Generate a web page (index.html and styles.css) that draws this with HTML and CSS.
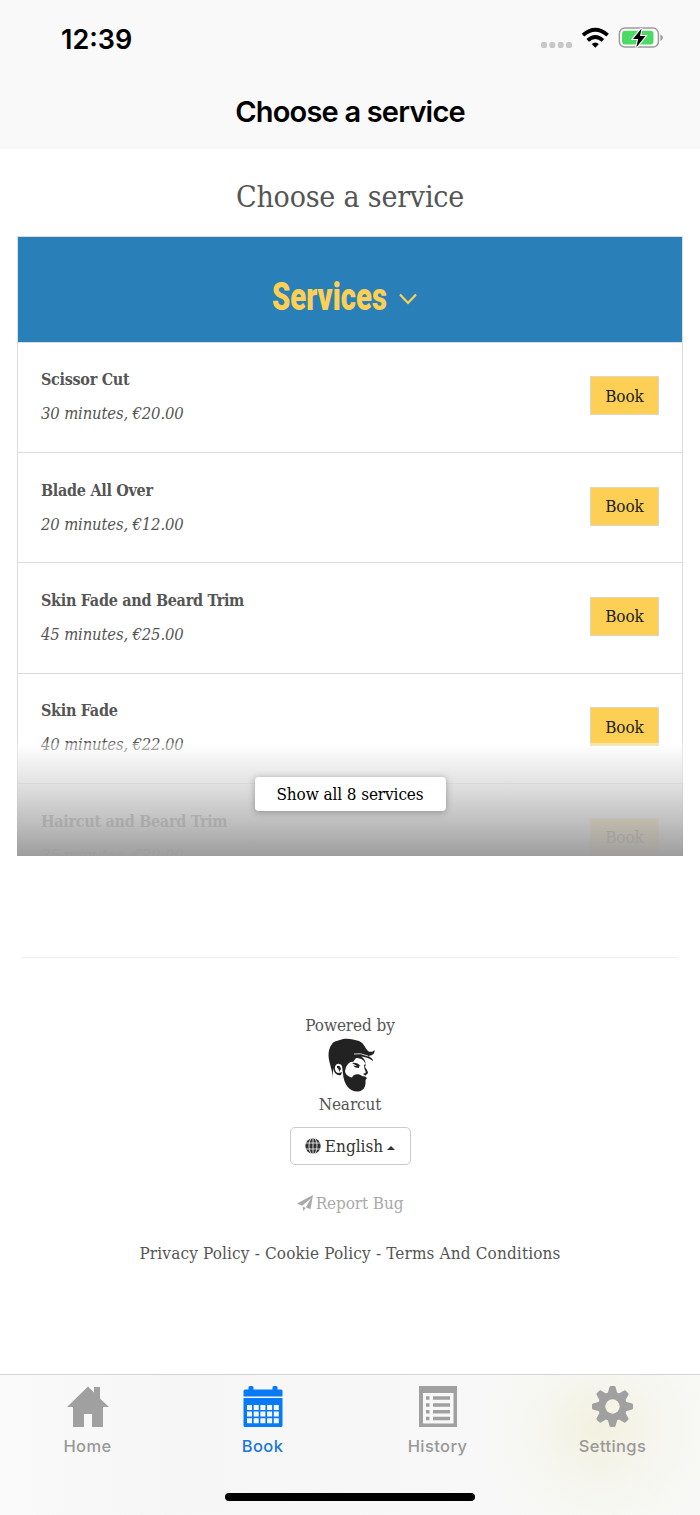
FILE: index.html
```html
<!DOCTYPE html>
<html lang="en">
<head>
<meta charset="utf-8">
<title>Choose a service</title>
<link rel="stylesheet" href="styles.css">
</head>
<body>
<header class="top">
  <div class="status">
    <span class="time">12:39</span>
    <svg class="status-icons" width="124" height="24" viewBox="0 0 124 24">
      <g fill="#c7c7c7"><rect x="1" y="15" width="6" height="6" rx="2"/><rect x="9.3" y="15" width="6" height="6" rx="2"/><rect x="17.7" y="15" width="6" height="6" rx="2"/><rect x="26" y="15" width="6" height="6" rx="2"/></g>
      <g fill="none" stroke="#000" stroke-width="3.7"><path d="M43 8.2Q55.3-2.6 67.6 8.2"/><path d="M47.7 13.3Q55.3 6.7 62.9 13.3"/></g>
      <path d="M51.7 17Q55.3 13.9 58.9 17L55.3 20.7Z"/>
      <rect x="79.4" y="1.1" width="39" height="19" rx="5.4" fill="#fff" stroke="#9b9b9b" stroke-width="1.5"/>
      <rect x="82" y="3.7" width="31.5" height="13.8" rx="3" fill="#4cd964"/>
      <path d="M120.4 7.4q2.5 1 2.5 3.3t-2.5 3.3Z" fill="#9b9b9b"/>
      <path d="M101.5 1.5L93 12h5.2l-2 8.5L105.5 9H100Z" stroke="#fff" stroke-width="2.2" paint-order="stroke"/>
    </svg>
  </div>
  <h1 class="nav-title">Choose a service</h1>
</header>
<main class="page">
  <h2 class="heading">Choose a service</h2>
  <section class="panel">
    <div class="panel-head"><span class="panel-title">Services</span>
      <svg class="chevron" width="18" height="13" viewBox="0 0 18 13"><path d="M1 1.5L9 10L17 1.5" fill="none" stroke="#fdd055" stroke-width="2.2"/></svg>
    </div>
    <div class="row"><div><div class="name">Scissor Cut</div><div class="meta">30 minutes, €20.00</div></div><button class="book">Book</button></div>
    <div class="row"><div><div class="name">Blade All Over</div><div class="meta">20 minutes, €12.00</div></div><button class="book">Book</button></div>
    <div class="row"><div><div class="name">Skin Fade and Beard Trim</div><div class="meta">45 minutes, €25.00</div></div><button class="book">Book</button></div>
    <div class="row"><div><div class="name">Skin Fade</div><div class="meta">40 minutes, €22.00</div></div><button class="book">Book</button></div>
    <div class="row"><div><div class="name">Haircut and Beard Trim</div><div class="meta">35 minutes, €20.00</div></div><button class="book">Book</button></div>
    <div class="fade"><button class="show-all">Show all 8 services</button></div>
  </section>
  <hr class="rule">
  <footer class="foot">
    <div class="powered">Powered by</div>
    <svg class="logo" width="50" height="54" viewBox="4 4 50 54">
      <path fill="#222" d="M11 45C11 39 9 35 8 30C6 23 5.500 16 10 10C12 7 15 7 18 6C23 3.500 31 5 37 7C42 9 43 14 46 17C48 18.500 51 18 52.500 16C53 20 50 22 46 22C49 23 51 25 51 27C47 24 43 23 39 22.500C42 24 44 28 43.500 30C42 26 39 24 34 24L31 28C28 27 26 30 24 33L23 37C23.500 41 27 43 30 43.500C31 40 37 39 40 42L43 42.500L45 44L43.500 46C44 52 42 57 36 57.500C28 58 22 51 21 40L20 32C18 29 14 29 13 33C12.500 36 14 39 17 39L20 38L19 41C15 42 12 39 11 34Z"/>
      <path d="M32 20Q38 18.500 46 22" fill="none" stroke="#fff" stroke-width=".8"/>
      <path fill="#222" d="M30 29Q35 28 39 32L37.500 31.500L37 34Q33 34 31 31.500L35 32ZM42 31L44 30L43 33Q46 37 46 39L43.500 41.500L41 40L44 38.500Q42 35 42 31ZM15 32Q18 31 19 35L17 38Q17 34 15 34Z"/>
    </svg>
    <div class="brand">Nearcut</div>
    <button class="lang">
      <svg width="16" height="16" viewBox="0 0 16 16"><circle cx="8" cy="8" r="7.7" fill="#333"/><g fill="none" stroke="#fff" stroke-width=".8"><ellipse cx="8" cy="8" rx="4" ry="8.500"/><path d="M8 0v16M0 5h16M0 11h16"/></g></svg>
      <span class="lang-label">English</span><i class="caret"></i>
    </button>
    <a class="bug"><svg width="16" height="16" viewBox="0 0 16 16" fill="#aaa"><path d="M16 0L13.5 14.2L8.8 12.2L14.2 3.2L5.2 10.7L0 8.6ZM5.6 11.6L8.8 13L6.2 16Z"/></svg><span>Report Bug</span></a>
    <div class="legal">Privacy Policy - Cookie Policy - Terms And Conditions</div>
  </footer>
</main>
<nav class="tabs">
  <a class="tab"><svg width="42" height="42" viewBox="0 0 42 42" fill="#a0a0a0"><path d="M21 0.500L0 21H6V41H17V28H25V41H36V21H42L33 12.500V1H27V6.500Z"/></svg><span>Home</span></a>
  <a class="tab active"><svg width="42" height="42" viewBox="0 0 42 42" fill="#087af5"><rect x="6.5" y="0" width="5" height="7" rx="1.5"/><rect x="30.5" y="0" width="5" height="7" rx="1.5"/><path d="M3 3.5H39Q40.500 3.500 40.500 5V10.500H1.500V5Q1.500 3.500 3 3.500ZM1.500 12H40.500V39.500Q40.500 41 39 41H3Q1.500 41 1.500 39.500Z"/><path fill="#f7f8f9" d="M5 19h5v5H5zm6.700 0h5v5h-5zm6.700 0h5v5h-5zm6.700 0h5v5h-5zm6.700 0h5v5h-5zM5 25.600h5v5H5zm6.700 0h5v5h-5zm6.700 0h5v5h-5zm6.700 0h5v5h-5zm6.700 0h5v5h-5zM5 32.300h5v5H5zm6.700 0h5v5h-5zm6.700 0h5v5h-5zm6.700 0h5v5h-5zm6.700 0h5v5h-5z"/></svg><span>Book</span></a>
  <a class="tab"><svg width="42" height="42" viewBox="0 0 42 42" fill="#a0a0a0"><path fill-rule="evenodd" d="M2 0H40V41H2ZM6 7V37.500H36.500V7Z"/><path d="M9 10.300h3.500v3.500H9zm7 0h17v3.500H16zM9 17.200h3.500v3.500H9zm7 0h17v3.500H16zM9 24h3.500v3.500H9zm7 0h17v3.500H16zM9 30.800h3.500v3.500H9zm7 0h17v3.500H16z"/></svg><span>History</span></a>
  <a class="tab"><svg width="42" height="42" viewBox="0 0 42 42"><g fill="#a0a0a0"><circle cx="20.500" cy="20.500" r="14.500"/><g id="teeth"><path id="tooth" d="M15.500 8L17.500 1Q17.700 0 19 0H22Q23.300 0 23.500 1L25.500 8V33L23.500 40Q23.300 41 22 41H19Q17.700 41 17.500 40L15.500 33Z"/><use href="#tooth" transform="rotate(90 20.500 20.500)"/></g><use href="#teeth" transform="rotate(45 20.500 20.500)"/></g><circle cx="20.500" cy="20.500" r="7.200" fill="#f4f3e6"/></svg><span>Settings</span></a>
  <i class="home-bar"></i>
</nav>
</body>
</html>
```
FILE: styles.css
```css
* { box-sizing: border-box; }
body { margin: 0; width: 700px; height: 1515px; display: flex; flex-direction: column; overflow: hidden; background: #fff; color: #555; font: 17px/24px "DejaVu Serif Condensed", "DejaVu Serif", serif; }
button { font: inherit; padding: 0; }
.top { height: 149px; background: #f9f9f9; color: #000; font-family: Inter, sans-serif; }
.status { height: 77px; padding: 0 36px 0 61px; display: flex; justify-content: space-between; align-items: center; }
.time { font-size: 27px; font-weight: 600; padding-top: 2px; }
.nav-title { margin: 15px 0 0; text-align: center; font-size: 29px; line-height: 40px; font-weight: 600; letter-spacing: -.8px; }
.page { height: 1225px; padding: 28px 17px 0; }
.heading { margin: 0 0 19px; height: 40px; text-align: center; font-size: 30px; line-height: 40px; font-weight: 400; letter-spacing: -.2px; }
.panel { position: relative; height: 619.500px; overflow: hidden; }
.panel-head { height: 106.500px; background: #2980b9; border: 1px solid #dcdcdc; display: flex; justify-content: center; align-items: center; padding: 15px 12px 0 0; gap: 12px; }
.panel-title { width: 115px; color: #fdd055; font: 900 38px/50px Roboto, sans-serif; transform: scaleX(.77); transform-origin: left center; white-space: nowrap; }
.chevron { margin-top: 5px; }
.row { height: 110.4px; padding: 0 23px; border: solid #dcdcdc; border-width: 0 1px 1px; display: flex; justify-content: space-between; align-items: center; }
.name { font-size: 16px; font-weight: 700; height: 34px; line-height: 33px; letter-spacing: -.3px; }
.meta { font-size: 16.5px; font-style: italic; height: 34px; line-height: 33px; letter-spacing: -.15px; }
.book { width: 69px; height: 39px; margin-top: -3px; border: 1px solid #ddd6c2; background: #fdd055; color: #222; letter-spacing: -.1px; }
.fade { position: absolute; left: 0; right: 0; bottom: 0; height: 113px; display: flex; justify-content: center; align-items: flex-start; padding-top: 34px; background: linear-gradient(rgba(255,255,255,.4), rgba(217,217,217,.75) 35%, rgba(182,182,182,.88) 70%, rgba(156,156,156,.99)); }
.show-all { width: 191px; height: 34px; border: 0; border-radius: 4px; background: #fff; color: #000; box-shadow: 0 1px 7px rgba(0,0,0,.3); letter-spacing: -.1px; }
.rule { margin: 101.500px 5px 0; border: 0; border-top: 1px solid #eee; }
.foot { display: flex; flex-direction: column; align-items: center; padding-top: 55px; }
.powered, .brand { height: 25px; line-height: 25px; letter-spacing: -.1px; }
.logo { margin-left: 2px; }
.lang { width: 121px; height: 38px; margin-top: 10px; border: 1px solid #ccc; border-radius: 5px; background: #fff; color: #333; display: flex; align-items: center; justify-content: center; gap: 4px; }
.caret { border: 4.500px solid transparent; border-top: 0; border-bottom: 4px solid #333; margin-top: 3px; }
.bug { color: #aaa; display: flex; align-items: center; gap: 3px; margin-top: 26px; letter-spacing: -.1px; }
.legal { margin-top: 26px; white-space: nowrap; letter-spacing: .15px; }
.tabs { position: relative; height: 141px; border-top: 1px solid #d4d4d4; background: radial-gradient(circle at 600px 55px, #f2f0df, rgba(246,246,238,.7) 65px, rgba(248,248,246,0) 120px), linear-gradient(90deg, #fafafa, #f6f6f6 25%, #f8f8f8 70%, #f8f8f6); display: flex; font: 500 16.5px/24px Inter, sans-serif; color: #999; padding-top: 11px; }
.tab { width: 175px; height: 80px; display: flex; flex-direction: column; align-items: center; gap: 6px; letter-spacing: .4px; }
.active { color: #1b78d8; }
.home-bar { position: absolute; left: 225px; bottom: 14px; width: 250px; height: 8px; border-radius: 4px; background: #000; }
```
